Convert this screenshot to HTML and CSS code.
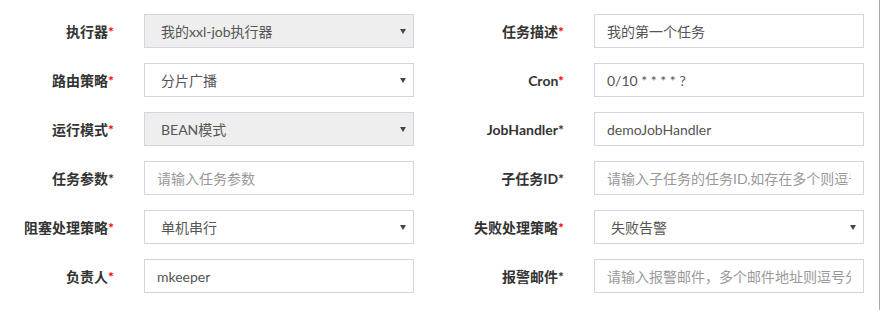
FILE: index.html
```html
<!DOCTYPE html>
<html lang="zh-CN">
<head>
  <meta charset="UTF-8">
  <title>新增任务</title>
  <link rel="stylesheet" href="styles.css">
</head>
<body>
  <form class="job-form">
    <label class="lbl" for="jobGroup">执行器<span class="req">*</span></label>
    <div class="sel">
      <select id="jobGroup" class="ctl" disabled>
        <option>我的xxl-job执行器</option>
      </select>
    </div>
    <label class="lbl" for="jobDesc">任务描述<span class="req">*</span></label>
    <input id="jobDesc" class="ctl" type="text" value="我的第一个任务">

    <label class="lbl" for="route">路由策略<span class="req">*</span></label>
    <div class="sel">
      <select id="route" class="ctl">
        <option>分片广播</option>
      </select>
    </div>
    <label class="lbl" for="cron">Cron<span class="req">*</span></label>
    <input id="cron" class="ctl" type="text" value="0/10 * * * * ?">

    <label class="lbl" for="glueType">运行模式<span class="req">*</span></label>
    <div class="sel">
      <select id="glueType" class="ctl" disabled>
        <option>BEAN模式</option>
      </select>
    </div>
    <label class="lbl" for="handler">JobHandler*</label>
    <input id="handler" class="ctl" type="text" value="demoJobHandler">

    <label class="lbl" for="param">任务参数*</label>
    <input id="param" class="ctl" type="text" placeholder="请输入任务参数">
    <label class="lbl" for="childId">子任务ID*</label>
    <input id="childId" class="ctl" type="text" placeholder="请输入子任务的任务ID,如存在多个则逗号分隔">

    <label class="lbl" for="block">阻塞处理策略<span class="req">*</span></label>
    <div class="sel">
      <select id="block" class="ctl">
        <option>单机串行</option>
      </select>
    </div>
    <label class="lbl" for="fail">失败处理策略<span class="req">*</span></label>
    <div class="sel">
      <select id="fail" class="ctl">
        <option>失败告警</option>
      </select>
    </div>

    <label class="lbl" for="author">负责人<span class="req">*</span></label>
    <input id="author" class="ctl" type="text" value="mkeeper">
    <label class="lbl" for="email">报警邮件*</label>
    <input id="email" class="ctl" type="text" placeholder="请输入报警邮件，多个邮件地址则逗号分隔">
  </form>
</body>
</html>
```

FILE: styles.css
```css
body { margin: 0; background: #fff; font-family: Lato, "Noto Sans CJK SC", sans-serif; font-size: 14px; color: #333; }
.job-form { width: 880px; height: 310px; box-sizing: border-box; border-right: 1px solid #a9a9a9; padding-top: 14px; display: grid; grid-template-columns: 114px 270px 120px 270px; grid-auto-rows: 34px; column-gap: 30px; row-gap: 15px; align-items: center; }
.lbl { text-align: right; font-weight: bold; white-space: nowrap; color: #333; }
.req { color: #f00; }
.ctl { display: block; width: 100%; height: 34px; box-sizing: border-box; border: 1px solid #d2d6de; border-radius: 0; background: #fff; padding: 0 12px; font: inherit; font-size: 14px; color: #555; outline: none; }
.ctl::placeholder { color: #999; }
.sel { position: relative; }
.sel select { appearance: none; -webkit-appearance: none; padding-left: 16px; }
.sel select:disabled { background: #eee; color: #555; opacity: 1; }
.sel::after { content: ""; position: absolute; right: 8px; top: 15px; border-left: 3px solid transparent; border-right: 3px solid transparent; border-top: 5px solid #444; pointer-events: none; }
```
